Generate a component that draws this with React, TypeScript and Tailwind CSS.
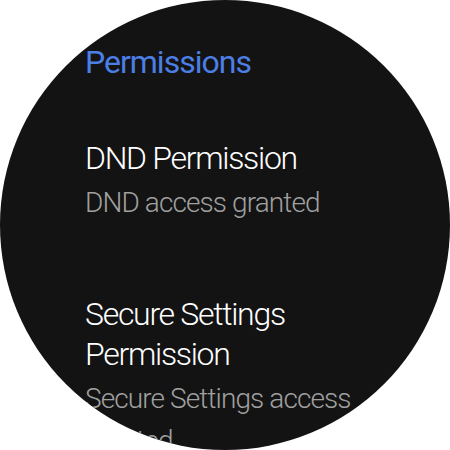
const items = [
  { title: 'DND Permission', subtitle: 'DND access granted' },
  { title: 'Secure Settings Permission', subtitle: 'Secure Settings access granted' },
];

export default function App() {
  return (
    <div className="w-[450px] h-[450px] bg-white overflow-hidden" style={{ fontFamily: 'Roboto, sans-serif' }}>
      <div className="w-[450px] h-[450px] rounded-full bg-[#131313] overflow-hidden">
        <div className="pl-[85px] pr-[50px] pt-[42px]">
          <h1 className="text-[32px] leading-[40px] tracking-[-1px] text-[#4b7fe6]">Permissions</h1>
          <div className="mt-[56px] flex flex-col gap-[70px]">
            {items.map((item) => (
              <div key={item.title} className="flex flex-col">
                <p className="text-[32px] leading-[40px] tracking-[-1.3px] font-light text-white">{item.title}</p>
                <p className="mt-[4px] text-[28px] leading-[42px] tracking-[-0.9px] font-light text-[#a0a0a0]">
                  {item.subtitle}
                </p>
              </div>
            ))}
          </div>
        </div>
      </div>
    </div>
  );
}
